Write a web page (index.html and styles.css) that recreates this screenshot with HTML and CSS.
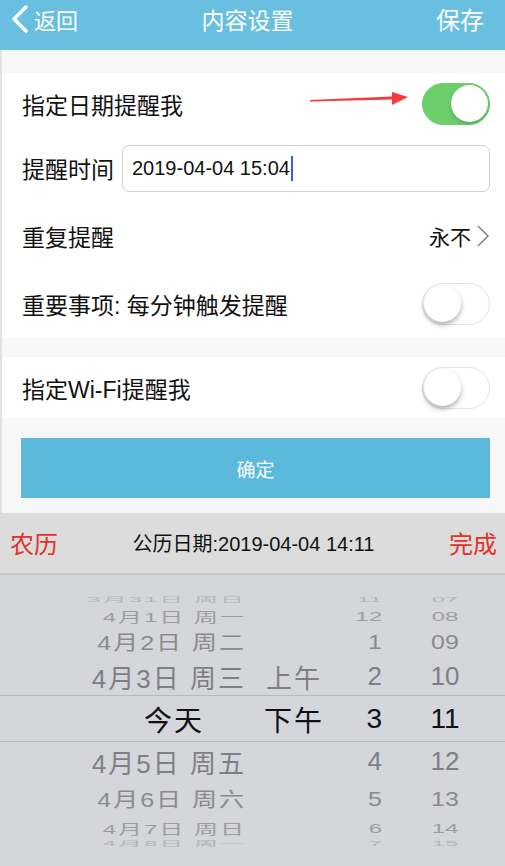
FILE: index.html
```html
<!DOCTYPE html>
<html lang="zh-CN">
<head>
    <meta charset="UTF-8">
    <meta name="viewport" content="width=device-width, initial-scale=1.0">
    <title>内容设置</title>
    <link rel="stylesheet" href="styles.css">
</head>
<body>

    <!-- top bar -->
    <header class="nav">
        <a class="nav-back" href="#">
            <svg class="chev" width="18" height="28" viewBox="0 0 18 28">
                <path d="M15 2 L3 14 L15 26" fill="none" stroke="#fff" stroke-width="3.4" stroke-linecap="round" stroke-linejoin="round"/>
            </svg>
            <span>返回</span>
        </a>
        <h1 class="nav-title">内容设置</h1>
        <a class="nav-save" href="#">保存</a>
    </header>

    <main class="settings">
        <div class="gap"></div>

        <section class="group">
            <div class="row row-first">
                <span class="label">指定日期提醒我</span>
                <span class="switch on"><span class="knob"></span></span>
                <!-- annotation arrow -->
                <svg class="mark" width="104" height="20" viewBox="0 0 104 20">
                    <polygon points="0,11 82,7.5 82,3 98,8 82,16 82,10.5 0,12.5" fill="#f53a3a"/>
                </svg>
            </div>
            <div class="row">
                <span class="label">提醒时间</span>
                <div class="field"><span>2019-04-04 15:04</span><i class="caret"></i></div>
            </div>
            <div class="row">
                <span class="label">重复提醒</span>
                <span class="value">永不
                    <svg width="14" height="24" viewBox="0 0 14 24"><path d="M2 2 L12 12 L2 22" fill="none" stroke="#777" stroke-width="1.4"/></svg>
                </span>
            </div>
            <div class="row">
                <span class="label">重要事项: 每分钟触发提醒</span>
                <span class="switch"><span class="knob"></span></span>
            </div>
        </section>

        <div class="gap gap-small"></div>

        <section class="group">
            <div class="row row-first">
                <span class="label">指定Wi-Fi提醒我</span>
                <span class="switch"><span class="knob"></span></span>
            </div>
        </section>

        <div class="actions">
            <button class="btn">确定</button>
        </div>
    </main>

    <!-- date picker -->
    <div class="picker">
        <div class="picker-bar">
            <a class="red" href="#">农历</a>
            <span class="picker-date">公历日期:2019-04-04 14:11</span>
            <a class="red" href="#">完成</a>
        </div>
        <div class="wheel">
            <div class="w-row far edge"><span>3月31日 周日</span><span></span><span>11</span><span>07</span></div>
            <div class="w-row far"><span>4月1日 周一</span><span></span><span>12</span><span>08</span></div>
            <div class="w-row mid"><span>4月2日 周二</span><span></span><span>1</span><span>09</span></div>
            <div class="w-row near"><span>4月3日 周三</span><span>上午</span><span>2</span><span>10</span></div>
            <div class="w-row sel"><span class="today">今天</span><span>下午</span><span>3</span><span>11</span></div>
            <div class="w-row near low"><span>4月5日 周五</span><span></span><span>4</span><span>12</span></div>
            <div class="w-row mid low"><span>4月6日 周六</span><span></span><span>5</span><span>13</span></div>
            <div class="w-row far low"><span>4月7日 周日</span><span></span><span>6</span><span>14</span></div>
            <div class="w-row far edge"><span>4月8日 周一</span><span></span><span>7</span><span>15</span></div>
        </div>
    </div>

</body>
</html>
```

FILE: styles.css
```css
* {
  margin: 0;
  padding: 0;
  box-sizing: border-box;
}

body {
  background-color: #f7f7f7;
  font-family: "Liberation Sans", "Noto Sans CJK SC", sans-serif;
  color: #111;
  width: 505px;
}
a {
  text-decoration: none;
  color: inherit;
}

/* top bar */
.nav {
  display: grid;
  grid-template-columns: 1fr auto 1fr;
  align-items: center;
  height: 50px;
  padding: 0 21px 13px 11px;
  background-color: #68bfe0;
  color: white;
  font-size: 23px;
}
.nav-back {
  display: flex;
  align-items: center;
  gap: 5px;
  font-size: 22px;
}
.nav-title {
  font-size: 23px;
  font-weight: normal;
}
.nav-save {
  justify-self: end;
  font-size: 24px;
}

/* list */
.settings {
  border-left: 2px solid #e2e2e2;
}
.gap {
  height: 23px;
}
.gap-small {
  height: 19px;
}
.group {
  background-color: white;
}
.row {
  position: relative;
  display: flex;
  align-items: center;
  justify-content: space-between;
  height: 68px;
  padding: 0 15px 0 20px;
  font-size: 23px;
}
.row-first {
  height: 61px;
}
.label {
  white-space: nowrap;
}
.value {
  display: flex;
  align-items: center;
  gap: 5px;
  font-size: 21px;
}

.field {
  flex: 1;
  display: flex;
  align-items: center;
  height: 47px;
  margin-left: 8px;
  padding-left: 9px;
  border: 1px solid #d0d0d0;
  border-radius: 7px;
  font-size: 20px;
}
.caret {
  display: inline-block;
  width: 2px;
  height: 25px;
  margin-left: 1px;
  background-color: #3b5ee8;
}

/* switches */
.switch {
  position: relative;
  display: block;
  width: 68px;
  height: 42px;
  border-radius: 21px;
  border: 1.5px solid #e4e4e4;
  background-color: white;
}
.switch .knob {
  position: absolute;
  top: 1px;
  left: 1px;
  width: 37px;
  height: 37px;
  border-radius: 50%;
  background-color: white;
  box-shadow: 0 3px 5px rgba(0, 0, 0, 0.3);
}
.switch.on {
  background-color: #6ccf6b;
  border-color: #6ccf6b;
}
.switch.on .knob {
  left: auto;
  right: 1px;
  box-shadow: 0 2px 4px rgba(0, 0, 0, 0.2);
}
.mark {
  position: absolute;
  left: 308px;
  top: 16px;
}

/* button */
.actions {
  padding: 20px 15px 15px 19px;
}
.btn {
  all: unset;
  display: block;
  width: 100%;
  height: 60px;
  background-color: #5bb9dc;
  color: white;
  text-align: center;
  font-size: 19px;
  font-family: "Liberation Sans", "Noto Sans CJK SC", sans-serif;
}

/* picker */
.picker-bar {
  display: flex;
  align-items: center;
  justify-content: space-between;
  height: 62px;
  padding: 0 8px 2px 10px;
  background-color: #dcdcdc;
  border-bottom: 2px solid #c4c4c4;
}
.red {
  color: #e2302a;
  font-size: 24px;
}
.picker-date {
  font-size: 20px;
}

.wheel {
  height: 291px;
  padding-top: 15px;
  background-color: #d4d6db;
}
.w-row {
  display: grid;
  grid-template-columns: 246px 94px 66px 78px;
  align-items: center;
  height: 40px;
  color: #7f7f83;
  font-size: 26px;
  letter-spacing: 2px;
}
.w-row span {
  text-align: center;
  white-space: nowrap;
}
.w-row span:first-child {
  text-align: right;
}
.w-row span:nth-child(2) {
  padding-left: 2px;
}
.w-row span:nth-child(3) {
  text-align: right;
  padding-right: 24px;
  letter-spacing: 0;
}
.w-row span:nth-child(4) {
  letter-spacing: 0;
}
.near {
  height: 38px;
}
.near.low {
  height: 39px;
}
.mid {
  height: 33px;
  font-size: 25px;
  color: #8a8a8e;
  transform: scaleY(0.8);
}
.far {
  height: 22px;
  font-size: 24px;
  color: #9c9ca0;
  transform: scaleY(0.55);
}
.far.low {
  height: 20px;
}
.edge {
  height: 12px;
  color: #b4b5b9;
  transform: scaleY(0.28);
}
.sel {
  height: 47px;
  color: #111;
  font-size: 28px;
  letter-spacing: 2px;
  border-top: 1px solid #b6b8bc;
  border-bottom: 1px solid #b6b8bc;
}
.sel .today {
  padding-right: 42px;
}
```
